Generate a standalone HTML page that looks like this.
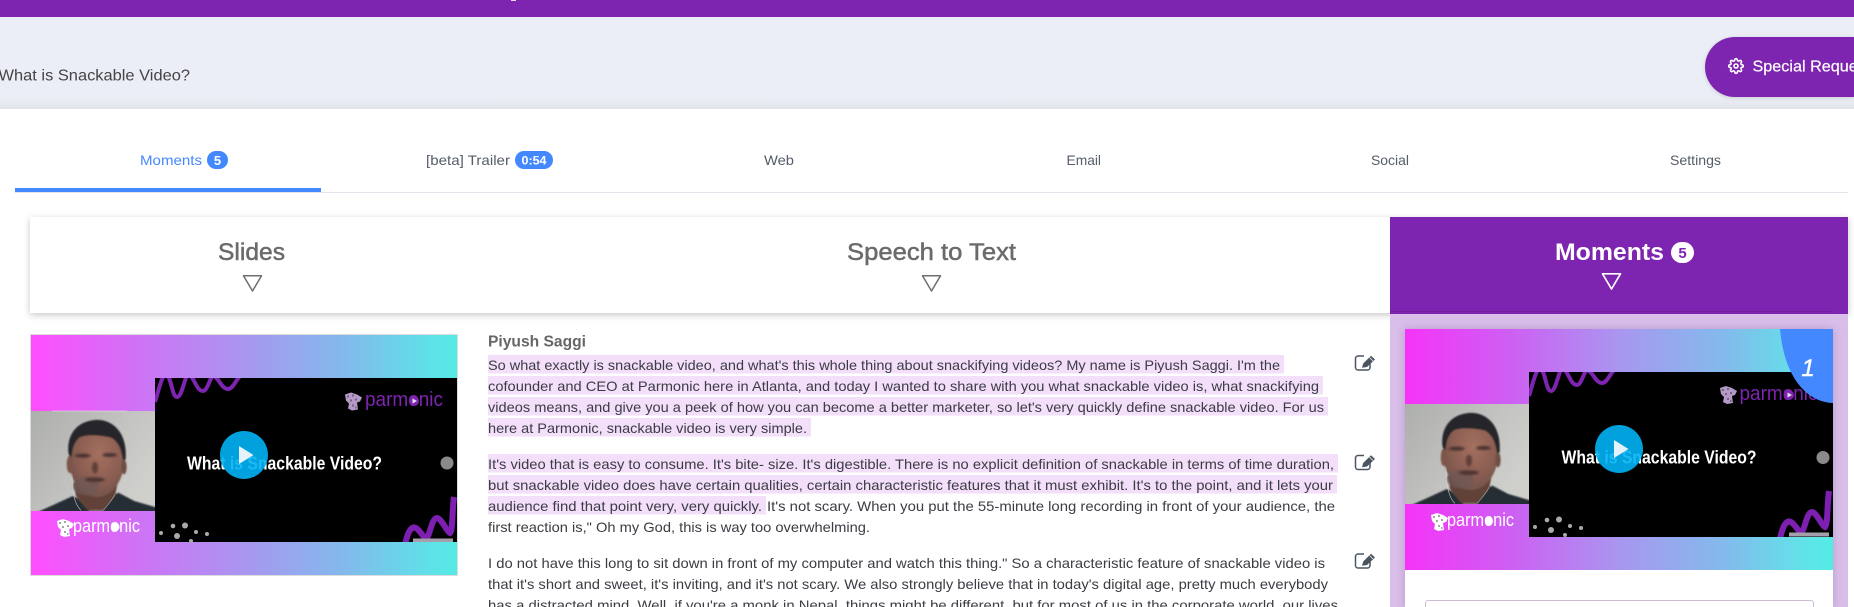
<!DOCTYPE html>
<html lang="en">
<head>
<meta charset="utf-8">
<title>What is Snackable Video?</title>
<style>
html,body{margin:0;padding:0;background:#fff;width:1854px;height:607px;overflow:hidden;}
body{position:relative;font-family:"Liberation Sans",sans-serif;}
.box{position:absolute;}
#top{left:0;top:0;width:1854px;height:17px;background:#7d24b0;}
#band{left:0;top:17px;width:1854px;height:92px;background:linear-gradient(#ebeef6 0,#ebeef6 88%,#e2e4ea 100%);}
#btn{left:1705px;top:37px;width:149px;height:60px;border-radius:30px 0 0 30px;background:#7d24b0;box-shadow:0 1px 4px rgba(0,0,0,.15);}
#tline{left:15px;top:192px;width:1833px;height:1px;background:#e3e3eb;}
#tactive{left:15px;top:188px;width:306px;height:4px;background:#4488ff;}
#head{left:30px;top:217px;width:1818px;height:96px;background:#fff;box-shadow:0 2px 7px rgba(0,0,0,.22);}
#headm{left:1390px;top:217px;width:458px;height:97px;background:#7d24b0;}
#headl{left:1390px;top:311px;width:443px;height:1px;background:rgba(0,0,0,.1);}
#lav{left:1390px;top:314px;width:458px;height:293px;background:#d8bee8;}
#card{left:1405px;top:329px;width:428px;height:278px;background:#fff;box-shadow:0 0 8px rgba(90,40,120,.25);}
#input{left:1425px;top:600px;width:387px;height:6px;border:1px solid #cdbcd6;border-bottom:none;border-radius:3px 3px 0 0;background:#fff;}
svg#s{position:absolute;left:0;top:0;display:block;}
</style>
</head>
<body>
<div class="box" id="top"></div>
<div class="box" id="band"></div>
<div class="box" id="btn"></div>
<div class="box" id="tline"></div>
<div class="box" id="tactive"></div>
<div class="box" id="head"></div>
<div class="box" id="headm"></div>
<div class="box" id="headl"></div>
<div class="box" id="lav"></div>
<div class="box" id="card"></div>
<div class="box" id="input"></div>

<svg id="s" width="1854" height="607" viewBox="0 0 1854 607" xmlns="http://www.w3.org/2000/svg" font-family="'Liberation Sans',sans-serif">
<defs>
<linearGradient id="g1" x1="0" x2="1" y1="0" y2="0">
<stop offset="0" stop-color="#ff4dff"/><stop offset=".05" stop-color="#f655fd"/><stop offset=".25" stop-color="#cf72f6"/><stop offset=".5" stop-color="#a996ef"/><stop offset=".75" stop-color="#80bcec"/><stop offset=".93" stop-color="#5fe0e8"/><stop offset="1" stop-color="#55eae6"/>
</linearGradient>
<linearGradient id="g2" x1="0" x2="1" y1="0" y2="0">
<stop offset="0" stop-color="#f533f8"/><stop offset=".25" stop-color="#cd60f3"/><stop offset=".5" stop-color="#a996ef"/><stop offset=".75" stop-color="#82bbec"/><stop offset=".93" stop-color="#62e2e8"/><stop offset="1" stop-color="#52ebe6"/>
</linearGradient>
<linearGradient id="wall" x1="0" x2="1" y1="0" y2="0.6">
<stop offset="0" stop-color="#adafac"/><stop offset=".6" stop-color="#c3c3c1"/><stop offset="1" stop-color="#cfcfcc"/>
</linearGradient>
<radialGradient id="skin" cx=".55" cy=".4" r=".65">
<stop offset="0" stop-color="#a4705f"/><stop offset=".6" stop-color="#8c5e52"/><stop offset="1" stop-color="#6f524a"/>
</radialGradient>
<filter id="b" x="-10%" y="-10%" width="120%" height="120%"><feGaussianBlur stdDeviation="2.5"/></filter>
<filter id="b2" x="-30%" y="-30%" width="160%" height="160%"><feGaussianBlur stdDeviation="3"/></filter>
<clipPath id="c1"><rect x="155" y="378" width="302" height="164"/></clipPath>
<clipPath id="c2"><rect x="1529" y="372" width="304" height="165"/></clipPath>
<clipPath id="cw"><rect x="0" y="0" width="372" height="300"/></clipPath>
<symbol id="face" viewBox="0 0 372 300" width="124" height="100">
<g clip-path="url(#cw)">
<rect width="372" height="300" fill="url(#wall)"/>
<g filter="url(#b)">
<path d="M15 305 L60 285 L125 255 L140 262 L175 300 L215 300 L245 255 L262 245 L310 270 L385 292 L385 310 Z" fill="#262f35"/>
<path d="M128 215 L262 205 L252 255 L215 298 L170 298 L135 255 Z" fill="#624238"/>
<ellipse cx="197" cy="150" rx="82" ry="108" fill="url(#skin)"/>
<ellipse cx="165" cy="225" rx="40" ry="28" fill="#6d5854" opacity=".7"/>
<path d="M113 130 C105 75 135 32 190 27 C245 22 290 65 284 145 L276 150 C272 115 262 92 240 80 C205 72 165 70 145 80 C128 95 123 115 122 142 Z" fill="#25252b"/>
<ellipse cx="116" cy="160" rx="9" ry="26" fill="#7e5649"/>
<ellipse cx="279" cy="168" rx="8" ry="22" fill="#6e4f44"/>
</g>
<g filter="url(#b2)">
<ellipse cx="155" cy="134" rx="24" ry="6" fill="#4a3532"/>
<ellipse cx="236" cy="132" rx="22" ry="6" fill="#4a3532"/>
<ellipse cx="192" cy="170" rx="9" ry="18" fill="#5e3f39"/>
<ellipse cx="192" cy="206" rx="30" ry="7" fill="#4e3530"/>
</g>
<path d="M123 190 C123 240 130 280 150 298" stroke="#d8d8d8" stroke-width="2" fill="none" opacity=".8"/>
<path d="M252 250 C242 270 227 285 217 298" stroke="#cfcfcf" stroke-width="2" fill="none" opacity=".7"/>
</g>
</symbol>
<symbol id="masc" viewBox="0 0 20 20" width="20" height="20">
<path d="M2 3 L8 1 L14 3 L19 6 L17 10 L14 11 L15 18 L9 19 L5 17 L6 12 L3 9 Z" fill="currentColor"/>
<g fill="#000" opacity=".35"><rect x="4" y="4" width="2" height="2"/><rect x="9" y="3" width="2" height="2"/><rect x="12" y="7" width="2" height="2"/><rect x="7" y="8" width="2" height="2"/><rect x="9" y="13" width="2" height="2"/><rect x="12" y="15" width="1.5" height="2"/></g>
</symbol>
</defs>

<rect x="511" y="0" width="5" height="1" fill="#ead9f2"/>

<!-- title bar -->
<text x="-1.5" y="80.5" font-size="16" fill="#444" textLength="191.5" lengthAdjust="spacingAndGlyphs">What is Snackable Video?</text>
<g transform="translate(1728,58) scale(.667)" fill="none" stroke="#fff" stroke-width="2.4" stroke-linecap="round" stroke-linejoin="round">
<circle cx="12" cy="12" r="3"/>
<path d="M19.4 15a1.65 1.65 0 0 0 .33 1.82l.06.06a2 2 0 0 1 0 2.83 2 2 0 0 1-2.83 0l-.06-.06a1.65 1.65 0 0 0-1.82-.33 1.65 1.65 0 0 0-1 1.51V21a2 2 0 0 1-2 2 2 2 0 0 1-2-2v-.09A1.65 1.65 0 0 0 9 19.4a1.65 1.65 0 0 0-1.82.33l-.06.06a2 2 0 0 1-2.83 0 2 2 0 0 1 0-2.83l.06-.06a1.65 1.65 0 0 0 .33-1.82 1.65 1.65 0 0 0-1.51-1H3a2 2 0 0 1-2-2 2 2 0 0 1 2-2h.09A1.65 1.65 0 0 0 4.6 9a1.65 1.65 0 0 0-.33-1.82l-.06-.06a2 2 0 0 1 0-2.83 2 2 0 0 1 2.83 0l.06.06a1.65 1.65 0 0 0 1.82.33H9a1.65 1.65 0 0 0 1-1.51V3a2 2 0 0 1 2-2 2 2 0 0 1 2 2v.09a1.65 1.65 0 0 0 1 1.51 1.65 1.65 0 0 0 1.82-.33l.06-.06a2 2 0 0 1 2.83 0 2 2 0 0 1 0 2.83l-.06.06a1.65 1.65 0 0 0-.33 1.82V9a1.65 1.65 0 0 0 1.51 1H21a2 2 0 0 1 2 2 2 2 0 0 1-2 2h-.09a1.65 1.65 0 0 0-1.51 1z"/>
</g>
<text x="1752.5" y="71.5" font-size="16" fill="#fff" stroke="#fff" stroke-width=".2" textLength="126" lengthAdjust="spacingAndGlyphs">Special Requests</text>

<!-- tabs -->
<text x="140" y="165" font-size="14" fill="#4488ff" textLength="62" lengthAdjust="spacingAndGlyphs">Moments</text>
<rect x="207" y="151" width="21" height="18" rx="9" fill="#4488ff"/>
<text x="217.5" y="165" font-size="13" font-weight="bold" fill="#fff" text-anchor="middle">5</text>
<text x="426" y="165" font-size="14" fill="#555d68" textLength="84" lengthAdjust="spacingAndGlyphs">[beta] Trailer</text>
<rect x="515" y="151" width="38" height="18" rx="9" fill="#4488ff"/>
<text x="534" y="164.5" font-size="12" font-weight="bold" fill="#fff" text-anchor="middle" textLength="25" lengthAdjust="spacingAndGlyphs">0:54</text>
<text x="764" y="165" font-size="14" fill="#555d68" textLength="30" lengthAdjust="spacingAndGlyphs">Web</text>
<text x="1066.5" y="165" font-size="14" fill="#555d68" textLength="34.5" lengthAdjust="spacingAndGlyphs">Email</text>
<text x="1371" y="165" font-size="14" fill="#555d68" textLength="38" lengthAdjust="spacingAndGlyphs">Social</text>
<text x="1670" y="165" font-size="14" fill="#555d68" textLength="51" lengthAdjust="spacingAndGlyphs">Settings</text>

<!-- panel heads -->
<text x="218" y="260" font-size="24" fill="#6b6b6b" stroke="#6b6b6b" stroke-width=".5" textLength="67" lengthAdjust="spacingAndGlyphs">Slides</text>
<path d="M243.5 275.8 H261.5 L252.5 291 Z" fill="none" stroke="#6f6f6f" stroke-width="1.5" stroke-linejoin="round"/>
<text x="847" y="260" font-size="24" fill="#6b6b6b" stroke="#6b6b6b" stroke-width=".5" textLength="169" lengthAdjust="spacingAndGlyphs">Speech to Text</text>
<path d="M922.5 275.8 H940.5 L931.5 291 Z" fill="none" stroke="#6f6f6f" stroke-width="1.5" stroke-linejoin="round"/>
<text x="1555" y="260" font-size="24" font-weight="bold" fill="#fff" textLength="109" lengthAdjust="spacingAndGlyphs">Moments</text>
<rect x="1671" y="242" width="23" height="21" rx="10.5" fill="#fff"/>
<text x="1682.5" y="258" font-size="15" font-weight="bold" fill="#7d24b0" text-anchor="middle">5</text>
<path d="M1602.5 273.8 H1620.5 L1611.5 289 Z" fill="none" stroke="#fff" stroke-width="1.7" stroke-linejoin="round"/>

<!-- slide video -->
<rect x="30.5" y="334.5" width="427" height="241" fill="url(#g1)" stroke="#dcdcdc" stroke-width="1"/>
<use href="#face" x="31" y="411"/>
<rect x="52" y="410.5" width="75" height="1" fill="#eee" opacity=".5"/>
<rect x="155" y="378" width="302" height="164" fill="#000"/>
<g clip-path="url(#c1)">
<path d="M155 402 C160 385 163 372 167 375 C172 380 172 397 177 397 C183 397 185 370 190 375 C195 380 197 391 203 391 C208 391 210 375 214 376 C220 380 222 389 228 389 C233 389 236 380 240 376" fill="none" stroke="#7d24b0" stroke-width="4"/>
<path d="M405 545 C408 530 412 526 416 528 C422 532 424 540 427 538 C430 534 432 518 437 518 C442 519 447 532 450 533 C453 530 452 510 454 497" fill="none" stroke="#7d1fb0" stroke-width="6"/>
<rect x="413" y="538.5" width="40" height="3.5" fill="#a59fab"/>
</g>
<g fill="#aaa"><circle cx="173" cy="526" r="2.3"/><circle cx="185" cy="525.5" r="3"/><circle cx="161" cy="533" r="2"/><circle cx="177" cy="536" r="3"/><circle cx="196" cy="532" r="2"/><circle cx="207" cy="534" r="2"/><circle cx="191" cy="541" r="2"/></g>
<use href="#masc" x="343" y="391.5" color="#b59ac8"/>
<text x="365" y="406" font-size="20" fill="#7d24b0" textLength="78" lengthAdjust="spacingAndGlyphs">parmonic</text>
<circle cx="414" cy="401" r="5" fill="#7d24b0"/><path d="M412.5 398.5 L417 401 L412.5 403.5 Z" fill="#e9dff0"/>
<use href="#masc" x="55" y="518" color="#fff"/>
<text x="73" y="532" font-size="18" fill="#fff" textLength="67" lengthAdjust="spacingAndGlyphs">parmonic</text>
<circle cx="115.5" cy="527" r="4" fill="#fff"/>
<text x="187" y="469.5" font-size="18" font-weight="bold" fill="#fff" textLength="195" lengthAdjust="spacingAndGlyphs">What is Snackable Video?</text>
<circle cx="447" cy="463" r="6.5" fill="#8a8a8a"/>
<circle cx="244" cy="455" r="24" fill="#00b2f5" opacity=".9"/>
<path d="M239 446 L253.5 455 L239 464 Z" fill="#e4f2f9"/>

<!-- transcript -->
<text x="488" y="346.5" font-size="16" font-weight="bold" fill="#666" textLength="98" lengthAdjust="spacingAndGlyphs">Piyush Saggi</text>
<g fill="#f3dffa">
<rect x="488" y="355" width="796" height="18.5"/>
<rect x="488" y="376" width="835" height="18.5"/>
<rect x="488" y="397" width="840" height="18.5"/>
<rect x="488" y="418" width="323" height="18.5"/>
<rect x="488" y="454" width="850" height="18.5"/>
<rect x="488" y="475" width="849" height="18.5"/>
<rect x="488" y="496" width="278" height="18.5"/>
</g>
<g font-size="14" fill="#3c3c44">
<text x="488" y="370" textLength="792" lengthAdjust="spacingAndGlyphs">So what exactly is snackable video, and what's this whole thing about snackifying videos? My name is Piyush Saggi. I'm the</text>
<text x="488" y="391" textLength="831" lengthAdjust="spacingAndGlyphs">cofounder and CEO at Parmonic here in Atlanta, and today I wanted to share with you what snackable video is, what snackifying</text>
<text x="488" y="412" textLength="836" lengthAdjust="spacingAndGlyphs">videos means, and give you a peek of how you can become a better marketer, so let's very quickly define snackable video. For us</text>
<text x="488" y="433" textLength="319" lengthAdjust="spacingAndGlyphs">here at Parmonic, snackable video is very simple.</text>
<text x="488" y="469" textLength="846" lengthAdjust="spacingAndGlyphs">It's video that is easy to consume. It's bite- size. It's digestible. There is no explicit definition of snackable in terms of time duration,</text>
<text x="488" y="490" textLength="845" lengthAdjust="spacingAndGlyphs">but snackable video does have certain qualities, certain characteristic features that it must exhibit. It's to the point, and it lets your</text>
<text x="488" y="511" textLength="274" lengthAdjust="spacingAndGlyphs">audience find that point very, very quickly.</text>
<text x="767" y="511" textLength="568" lengthAdjust="spacingAndGlyphs">It's not scary. When you put the 55-minute long recording in front of your audience, the</text>
<text x="488" y="532" textLength="382" lengthAdjust="spacingAndGlyphs">first reaction is," Oh my God, this is way too overwhelming.</text>
<text x="488" y="568" textLength="837" lengthAdjust="spacingAndGlyphs">I do not have this long to sit down in front of my computer and watch this thing." So a characteristic feature of snackable video is</text>
<text x="488" y="589" textLength="840" lengthAdjust="spacingAndGlyphs">that it's short and sweet, it's inviting, and it's not scary. We also strongly believe that in today's digital age, pretty much everybody</text>
<text x="488" y="610" textLength="850" lengthAdjust="spacingAndGlyphs">has a distracted mind. Well, if you're a monk in Nepal, things might be different, but for most of us in the corporate world, our lives</text>
</g>
<g>
<path d="M1364 356 H1358 a2.5 2.5 0 0 0 -2.5 2.5 V367.5 a2.5 2.5 0 0 0 2.5 2.5 H1367.5 a2.5 2.5 0 0 0 2.5 -2.5 V362" fill="none" stroke="#4a5560" stroke-width="1.5"/>
<path d="M1362 367.7 L1363.2 363.5 L1371 355.7 L1375 359.5 L1367 367 Z" fill="#4a5560"/>
<path d="M1369.5 357.5 L1373 361" stroke="#fff" stroke-width=".7"/>
</g>
<g transform="translate(0,99.5)">
<path d="M1364 356 H1358 a2.5 2.5 0 0 0 -2.5 2.5 V367.5 a2.5 2.5 0 0 0 2.5 2.5 H1367.5 a2.5 2.5 0 0 0 2.5 -2.5 V362" fill="none" stroke="#4a5560" stroke-width="1.5"/>
<path d="M1362 367.7 L1363.2 363.5 L1371 355.7 L1375 359.5 L1367 367 Z" fill="#4a5560"/>
<path d="M1369.5 357.5 L1373 361" stroke="#fff" stroke-width=".7"/>
</g>
<g transform="translate(0,198)">
<path d="M1364 356 H1358 a2.5 2.5 0 0 0 -2.5 2.5 V367.5 a2.5 2.5 0 0 0 2.5 2.5 H1367.5 a2.5 2.5 0 0 0 2.5 -2.5 V362" fill="none" stroke="#4a5560" stroke-width="1.5"/>
<path d="M1362 367.7 L1363.2 363.5 L1371 355.7 L1375 359.5 L1367 367 Z" fill="#4a5560"/>
<path d="M1369.5 357.5 L1373 361" stroke="#fff" stroke-width=".7"/>
</g>

<!-- moment card video -->
<rect x="1405" y="329" width="428" height="241" fill="url(#g2)"/>
<use href="#face" x="1405" y="404"/>
<rect x="1529" y="372" width="304" height="165" fill="#000"/>
<g clip-path="url(#c2)">
<path d="M1529 396 C1534 379 1537 366 1541 369 C1546 374 1546 391 1551 391 C1557 391 1559 364 1564 369 C1569 374 1571 385 1577 385 C1582 385 1584 369 1588 370 C1594 374 1596 383 1602 383 C1607 383 1610 374 1614 370" fill="none" stroke="#7d24b0" stroke-width="4"/>
<path d="M1780 539 C1783 524 1787 520 1791 522 C1797 526 1799 534 1802 532 C1805 528 1807 512 1812 512 C1817 513 1822 526 1825 527 C1828 524 1827 504 1829 491" fill="none" stroke="#7d1fb0" stroke-width="6"/>
<rect x="1789" y="532.5" width="40" height="4" fill="#a59fab"/>
</g>
<g fill="#aaa"><circle cx="1547" cy="520" r="2.3"/><circle cx="1559" cy="519.5" r="3"/><circle cx="1535" cy="527" r="2"/><circle cx="1551" cy="530" r="3"/><circle cx="1570" cy="526" r="2"/><circle cx="1581" cy="528" r="2"/><circle cx="1565" cy="535" r="2"/></g>
<use href="#masc" x="1718" y="385" color="#b59ac8"/>
<text x="1739.5" y="400" font-size="20" fill="#7d24b0" textLength="78" lengthAdjust="spacingAndGlyphs">parmonic</text>
<circle cx="1789" cy="395" r="5" fill="#7d24b0"/><path d="M1787.5 392.5 L1792 395 L1787.5 397.5 Z" fill="#e9dff0"/>
<use href="#masc" x="1429" y="512" color="#fff"/>
<text x="1447" y="526" font-size="18" fill="#fff" textLength="67" lengthAdjust="spacingAndGlyphs">parmonic</text>
<circle cx="1489" cy="521" r="4" fill="#fff"/>
<text x="1561.5" y="463.5" font-size="18" font-weight="bold" fill="#fff" textLength="195" lengthAdjust="spacingAndGlyphs">What is Snackable Video?</text>
<circle cx="1823" cy="457.5" r="6.5" fill="#8a8a8a"/>
<circle cx="1619" cy="449" r="24" fill="#00b2f5" opacity=".9"/>
<path d="M1614 440 L1628.5 449 L1614 458 Z" fill="#e4f2f9"/>
<path d="M1780 329 H1833 V403 C1805 402 1784 375 1780 329 Z" fill="#4488ff"/>
<text x="1808" y="376" font-size="24" font-style="italic" fill="#fff" stroke="#fff" stroke-width=".4" text-anchor="middle">1</text>
</svg>
</body>
</html>
